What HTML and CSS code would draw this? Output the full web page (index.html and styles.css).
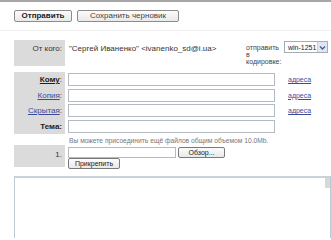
FILE: index.html
```html
<!DOCTYPE html>
<html lang="ru">
<head>
    <meta charset="UTF-8">
    <meta name="viewport" content="width=device-width, initial-scale=1.0">
    <title>Новое письмо</title>
    <link rel="stylesheet" href="styles.css">
</head>
<body>
    <div class="toolbar">
        <button class="btn btn-send">Отправить</button>
        <button class="btn btn-draft">Сохранить черновик</button>
    </div>

    <div class="compose">
        <div class="row-from">
            <div class="label label-from">От кого:</div>
            <div class="from-value">"Сергей Иваненко" &lt;ivanenko_sd@i.ua&gt;</div>
            <div class="charset-label">отправить<br>в<br>кодировке:</div>
            <div class="select">
                <span>win-1251</span>
                <span class="select-arrow">
                    <svg width="9" height="9" viewBox="0 0 9 9"><path d="M2 3.5 L4.5 6 L7 3.5" fill="none" stroke="#4d6185" stroke-width="1.4"/></svg>
                </span>
            </div>
        </div>

        <div class="fields">
            <div class="row">
                <div class="label"><a href="#" class="strong">Кому</a>:</div>
                <input class="field" type="text">
                <a href="#" class="addr">адреса</a>
            </div>
            <div class="row">
                <div class="label"><a href="#">Копия</a>:</div>
                <input class="field" type="text">
                <a href="#" class="addr">адреса</a>
            </div>
            <div class="row">
                <div class="label"><a href="#">Скрытая</a>:</div>
                <input class="field" type="text">
                <a href="#" class="addr">адреса</a>
            </div>
            <div class="row">
                <div class="label strong">Тема:</div>
                <input class="field" type="text">
            </div>
        </div>

        <div class="hint">Вы можете присоединить ещё файлов общим объемом 10.0Mb.</div>

        <div class="row-attach">
            <div class="label label-num">1.</div>
            <div class="attach">
                <div class="file-line">
                    <input class="file-input" type="text">
                    <button class="btn btn-small">Обзор...</button>
                </div>
                <button class="btn btn-small">Прикрепить</button>
            </div>
        </div>

        <div class="body-box">
            <div class="scroll"></div>
        </div>
    </div>
</body>
</html>
```

FILE: styles.css
```css
*{
    box-sizing: border-box;
    margin: 0;
    padding: 0;
}
html{
    overflow: hidden;
}
body{
    font-family: "Liberation Sans", Arial, sans-serif;
    font-size: 8px;
    color: #333;
    background: #fff;
    border-top: 2px solid #a6a6a6;
    height: 240px;
    overflow: hidden;
}
a{
    color: #3a4c9c;
}
.toolbar{
    display: flex;
    gap: 5px;
    padding: 8px 14px 0;
    height: 29px;
    border-bottom: 1px solid #f0f0f0;
}
.btn{
    font-family: "Liberation Sans", Arial, sans-serif;
    font-size: 8px;
    color: #222;
    height: 12px;
    line-height: 10px;
    border: 1px solid #8c8c8c;
    border-radius: 2px;
    background: linear-gradient(#fcfcfc, #e9e9e9);
}
.btn-send{
    width: 58px;
    font-weight: bold;
}
.btn-draft{
    width: 102px;
    color: #444;
}
.compose{
    padding: 9px 0 0 14px;
}
.label{
    width: 51px;
    background: #dbdbdb;
    text-align: right;
    padding-right: 3px;
    flex-shrink: 0;
}
.strong{
    font-weight: bold;
    color: #222;
}
.row-from{
    display: flex;
    height: 26px;
}
.label-from{
    padding-top: 4px;
}
.from-value{
    width: 181px;
    padding: 4px 0 0 4px;
}
.charset-label{
    width: 38px;
    font-size: 7px;
    line-height: 7px;
    padding-top: 4px;
    color: #444;
}
.select{
    display: flex;
    align-items: center;
    justify-content: space-between;
    width: 44px;
    height: 12px;
    margin-top: 1px;
    border: 1px solid #a5acb2;
    padding-left: 3px;
    font-size: 7px;
    color: #222;
}
.select-arrow{
    display: flex;
    align-items: center;
    justify-content: center;
    width: 10px;
    height: 10px;
    background: #dde6f6;
    border-left: 1px solid #c3d0e8;
}
.fields{
    margin-top: 6px;
}
.row{
    display: flex;
    align-items: center;
    height: 15.5px;
}
.row .label{
    height: 100%;
    line-height: 15px;
}
.field{
    width: 207px;
    height: 13px;
    margin-left: 3px;
    border: 1px solid #b3bac2;
    background: #fff;
}
.addr{
    margin-left: 13px;
    font-size: 7px;
}
.hint{
    font-size: 6.7px;
    color: #777;
    padding: 3px 0 0 55px;
    height: 11px;
}
.row-attach{
    display: flex;
    height: 22px;
}
.label-num{
    padding-top: 5px;
}
.attach{
    display: flex;
    flex-direction: column;
    align-items: flex-start;
    padding: 2px 0 0 3px;
}
.file-line{
    display: flex;
    gap: 2px;
    height: 11px;
}
.file-input{
    width: 108px;
    height: 11px;
    border: 1px solid #b3bac2;
}
.btn-small{
    height: 11px;
    line-height: 9px;
    font-size: 7px;
    padding: 0 4px;
    border-color: #7a7a7a;
}
.file-line .btn-small{
    width: 47px;
}
.row-attach > .attach > .btn-small{
    width: 52px;
}
.body-box{
    margin-top: 9px;
    width: 317px;
    height: 62px;
    border: 1px solid #bccad6;
    border-top: 2px solid #c8d3dc;
    border-bottom: none;
    display: flex;
    justify-content: flex-end;
}
.scroll{
    width: 5px;
    height: 10px;
    background: #d8d8d8;
}
```
